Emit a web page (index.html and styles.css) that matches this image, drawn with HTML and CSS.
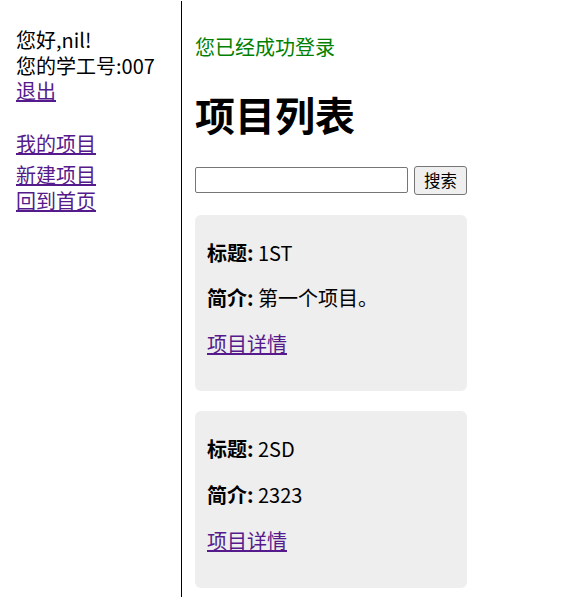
FILE: index.html
```html
<!DOCTYPE html>
<html lang="zh">
<head>
<meta charset="utf-8">
<title>项目列表</title>
<link rel="stylesheet" href="styles.css">
</head>
<body>
<div class="layout">
  <aside class="sidebar">
    <div class="user">您好,nil!<br>您的学工号:007<br><a href="#">退出</a></div>
    <nav class="nav">
      <a class="nav-link" href="#">我的项目</a>
      <a class="nav-link nav-gap" href="#">新建项目</a>
      <a class="nav-link" href="#">回到首页</a>
    </nav>
  </aside>
  <main class="main">
    <p class="flash">您已经成功登录</p>
    <h1 class="title">项目列表</h1>
    <form class="search">
      <input class="search-input" type="text">
      <button class="search-btn" type="button">搜索</button>
    </form>
    <div class="card">
      <p><strong>标题:</strong> 1ST</p>
      <p><strong>简介:</strong> 第一个项目。</p>
      <p><a href="#">项目详情</a></p>
    </div>
    <div class="card">
      <p><strong>标题:</strong> 2SD</p>
      <p><strong>简介:</strong> 2323</p>
      <p><a href="#">项目详情</a></p>
    </div>
  </main>
</div>
</body>
</html>
```
FILE: styles.css
```css
html, body {
  margin: 0;
  padding: 0;
  background: #fff;
}
body {
  font-family: "Noto Sans CJK SC", "Noto Sans", sans-serif;
  font-size: 20px;
  line-height: 25.6px;
  color: #000;
}
a {
  color: #551a8b;
  text-decoration: underline;
}
.layout {
  display: flex;
  min-height: 597px;
  align-items: stretch;
}
.sidebar {
  width: 165px;
  flex: none;
  padding: 26px 0 0 16px;
  border-right: 1px solid #000;
  margin-top: 1px;
}
.nav {
  display: flex;
  flex-direction: column;
  align-items: flex-start;
  margin-top: 27px;
}
.nav-gap {
  margin-top: 6px;
}
.main {
  padding: 34px 0 0 13px;
  flex: 1;
}
.flash {
  color: green;
  margin: 0;
}
.title {
  font-size: 40px;
  line-height: 52px;
  font-weight: bold;
  margin: 28px 0 26px;
}
.search {
  display: flex;
  align-items: center;
  gap: 6px;
  margin: 0 0 20px;
}
.search-input {
  box-sizing: border-box;
  width: 213px;
  height: 26px;
  border: 1px solid #767676;
  border-radius: 2px;
  padding: 1px 2px;
  font-size: 16px;
  margin: 0;
}
.search-btn {
  box-sizing: border-box;
  width: 53px;
  height: 29px;
  font-family: "Noto Sans CJK SC", sans-serif;
  font-size: 16.5px;
  line-height: 20px;
  padding: 0 6px;
  background: #efefef;
  border: 1px solid #767676;
  border-radius: 3px;
  color: #000;
  margin: 0;
}
.card {
  width: 248px;
  background: #eeeeee;
  border-radius: 6px;
  padding: 5px 12px 15px;
  margin-bottom: 20px;
}
.card + .card {
  margin-top: 1px;
}
.card p {
  margin: 20px 0;
}
```
